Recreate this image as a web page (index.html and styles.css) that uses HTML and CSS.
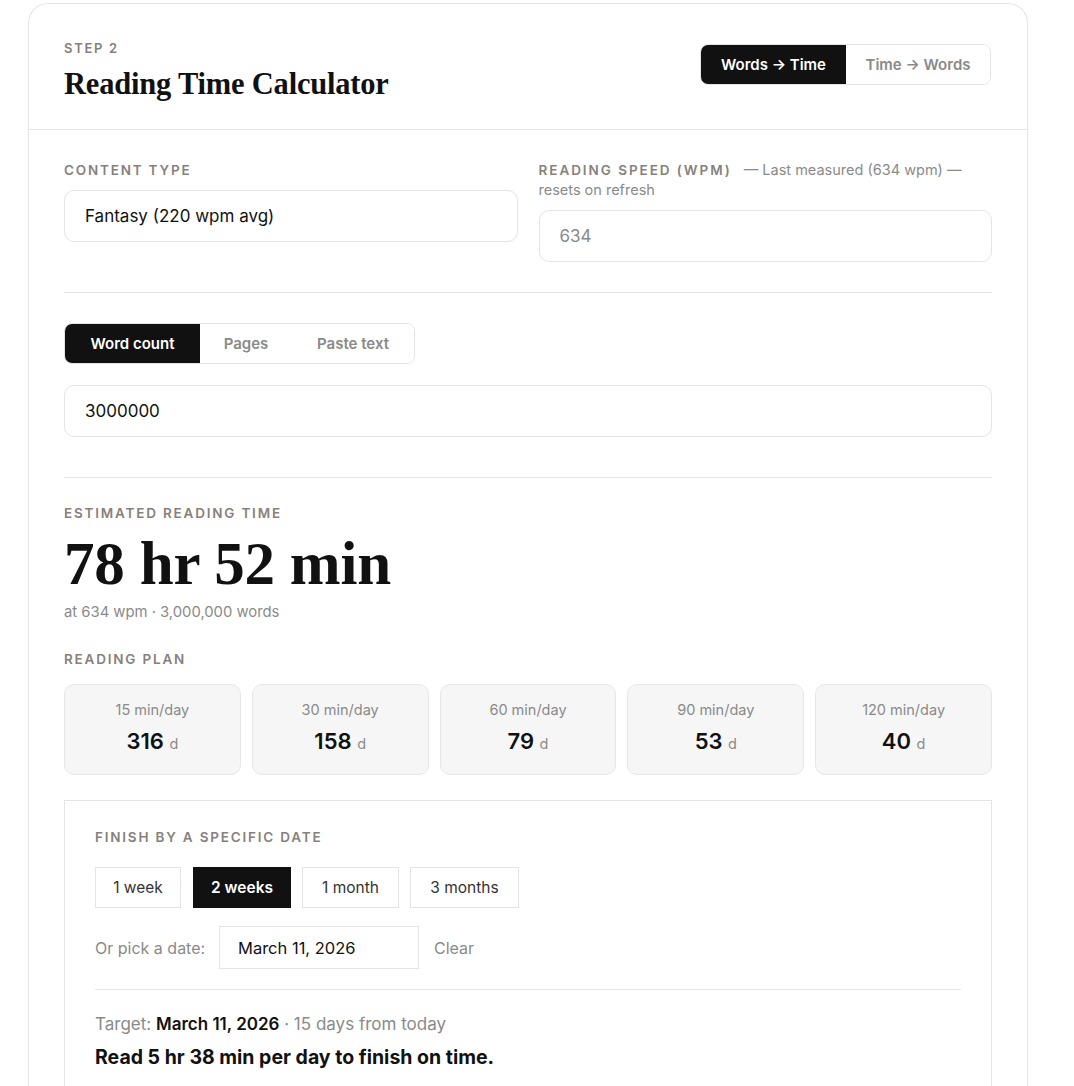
FILE: index.html
```html
<!DOCTYPE html>
<html>
<head>
<meta charset="utf-8">
<link rel="stylesheet" href="styles.css">
</head>
<body>
<div class="card">
  <header class="head">
    <div>
      <div class="eyebrow">STEP 2</div>
      <h1 class="title">Reading Time Calculator</h1>
    </div>
    <div class="seg seg-mode">
      <button class="seg-btn active">Words → Time</button>
      <button class="seg-btn">Time → Words</button>
    </div>
  </header>
  <section class="body">
    <div class="cols">
      <div class="field">
        <div class="label">CONTENT TYPE</div>
        <div class="input">Fantasy (220 wpm avg)</div>
      </div>
      <div class="field">
        <div class="label"><span class="lt">READING SPEED (WPM)</span><span class="hint">— Last measured (634 wpm) —</span><br><span class="hint">resets on refresh</span></div>
        <div class="input muted">634</div>
      </div>
    </div>
    <hr class="div">
    <div class="seg seg-src">
      <button class="seg-btn active wc">Word count</button>
      <button class="seg-btn pg">Pages</button>
      <button class="seg-btn pt">Paste text</button>
    </div>
    <div class="input full">3000000</div>
    <hr class="div div-b">
    <div class="label">ESTIMATED READING TIME</div>
    <div class="big">78 hr 52 min</div>
    <div class="sub">at 634 wpm · 3,000,000 words</div>
    <div class="label plan-label">READING PLAN</div>
    <div class="plan">
      <div class="pcard"><div class="pl">15 min/day</div><div class="pv">316 <span>d</span></div></div>
      <div class="pcard"><div class="pl">30 min/day</div><div class="pv">158 <span>d</span></div></div>
      <div class="pcard"><div class="pl">60 min/day</div><div class="pv">79 <span>d</span></div></div>
      <div class="pcard"><div class="pl">90 min/day</div><div class="pv">53 <span>d</span></div></div>
      <div class="pcard"><div class="pl">120 min/day</div><div class="pv">40 <span>d</span></div></div>
    </div>
    <div class="finish">
      <div class="label">FINISH BY A SPECIFIC DATE</div>
      <div class="chips">
        <button class="chip c1">1 week</button>
        <button class="chip c2 on">2 weeks</button>
        <button class="chip c3">1 month</button>
        <button class="chip c4">3 months</button>
      </div>
      <div class="daterow">
        <span class="or">Or pick a date:</span>
        <div class="dinput">March 11, 2026</div>
        <span class="clear">Clear</span>
      </div>
      <hr class="div2">
      <div class="target">Target: <b>March 11, 2026</b> · 15 days from today</div>
      <div class="verdict">Read 5 hr 38 min per day to finish on time.</div>
    </div>
  </section>
</div>
</body>
</html>
```

FILE: styles.css
```css
* { box-sizing: border-box; }
html, body { margin: 0; padding: 0; background: #fff; }
body {
  font-family: Inter, "Noto Sans", sans-serif;
  color: #111;
  padding: 3px 0 0 28px;
}
button { font-family: inherit; cursor: pointer; }
.card {
  width: 1000px;
  border: 1px solid #e4e4e4;
  border-bottom: none;
  border-radius: 20px 20px 0 0;
  min-height: 1100px;
}
.head {
  height: 126px;
  border-bottom: 1px solid #e4e4e4;
  display: flex;
  justify-content: space-between;
  align-items: flex-start;
  padding: 36px 35px 0 35px;
}
.eyebrow {
  font-size: 13px;
  font-weight: 600;
  letter-spacing: 1.7px;
  color: #86817c;
  line-height: 16px;
}
.title {
  margin: 10px 0 0;
  font-family: "Liberation Serif", "DejaVu Serif", serif;
  font-weight: 700;
  font-size: 30.5px;
  line-height: 36px;
  letter-spacing: -0.2px;
  color: #111;
}
.seg {
  display: flex;
  border: 1px solid #e4e4e4;
  border-radius: 8px;
  overflow: hidden;
  height: 41px;
}
.seg-mode { margin-top: 4px; margin-right: 1px; }
.seg-btn {
  border: none;
  background: #fff;
  color: #8a8a8a;
  font-size: 15px;
  font-weight: 600;
  padding: 0;
  height: 100%;
}
.seg-mode .seg-btn:first-child { width: 145px; }
.seg-mode .seg-btn:last-child { width: 144px; }
.seg-btn.active { background: #111; color: #fff; }
.body { padding: 30px 35px 0 35px; }
.cols {
  display: grid;
  grid-template-columns: 1fr 1fr;
  gap: 21px;
}
.label {
  font-size: 13.5px;
  font-weight: 600;
  letter-spacing: 1.8px;
  color: #86817c;
  line-height: 20px;
}
.lt { margin-right: 12px; letter-spacing: 1.95px; }
.hint {
  font-size: 14.5px;
  font-weight: 400;
  letter-spacing: 0;
  color: #8a8a8a;
  line-height: 20px;
}
.input {
  margin-top: 10px;
  height: 52px;
  border: 1px solid #e4e4e4;
  border-radius: 10px;
  padding: 0 20px;
  display: flex;
  align-items: center;
  font-size: 17px;
  color: #111;
}
.input.muted { color: #8a8a8a; }
.input.full { margin-top: 21px; }
.div {
  border: none;
  border-top: 1px solid #e4e4e4;
  margin: 30px 0;
}
.div-b { margin: 40px 0 25px; }
.seg-src { width: 351px; }
.seg-src .wc { width: 135px; }
.seg-src .pg { width: 92px; }
.seg-src .pt { width: 122px; }
.big {
  font-family: "Liberation Serif", "DejaVu Serif", serif;
  font-weight: 700;
  font-size: 61px;
  line-height: 70px;
  margin-top: 6px;
  letter-spacing: -0.2px;
  color: #111;
}
.sub {
  font-size: 14.8px;
  color: #8a8a8a;
  margin-top: 4px;
}
.plan-label { margin-top: 28px; }
.plan {
  margin-top: 15px;
  display: grid;
  grid-template-columns: repeat(5, 1fr);
  gap: 11px;
}
.pcard {
  height: 91px;
  background: #f6f6f6;
  border: 1px solid #e6e6e6;
  border-radius: 10px;
  text-align: center;
  padding-top: 16px;
}
.pl { font-size: 14.5px; color: #8a8a8a; line-height: 18px; }
.pv { font-size: 22px; font-weight: 600; margin-top: 8px; line-height: 28px; color: #111; }
.pv span { font-size: 14.5px; font-weight: 400; color: #8a8a8a; }
.finish {
  margin-top: 25px;
  border: 1px solid #e4e4e4;
  border-bottom: none;
  padding: 26px 30px 30px 30px;
}
.chips { display: flex; gap: 11px; margin-top: 20px; }
.chip {
  height: 41px;
  border: 1px solid #e4e4e4;
  background: #fff;
  color: #333;
  font-size: 15.5px;
  font-weight: 400;
  padding: 0;
}
.c1 { width: 86px; margin-right: 1px; }
.c2 { width: 98px; }
.c3 { width: 97px; }
.c4 { width: 109px; }
.chip.on { background: #111; color: #fff; font-weight: 600; border-color: #111; }
.daterow { display: flex; align-items: center; margin-top: 18px; }
.or { font-size: 16px; color: #8a8a8a; width: 124px; }
.dinput {
  width: 200px;
  height: 43px;
  border: 1px solid #e4e4e4;
  padding: 0 18px;
  display: flex;
  align-items: center;
  font-size: 16.5px;
  color: #111;
}
.clear { font-size: 16px; color: #8a8a8a; margin-left: 15px; }
.div2 {
  border: none;
  border-top: 1px solid #e4e4e4;
  margin: 20px 0 0;
}
.target { margin-top: 24px; font-size: 17px; color: #8a8a8a; }
.target b { color: #111; font-weight: 600; }
.verdict { margin-top: 11px; font-size: 19.5px; font-weight: 700; color: #111; }
```
